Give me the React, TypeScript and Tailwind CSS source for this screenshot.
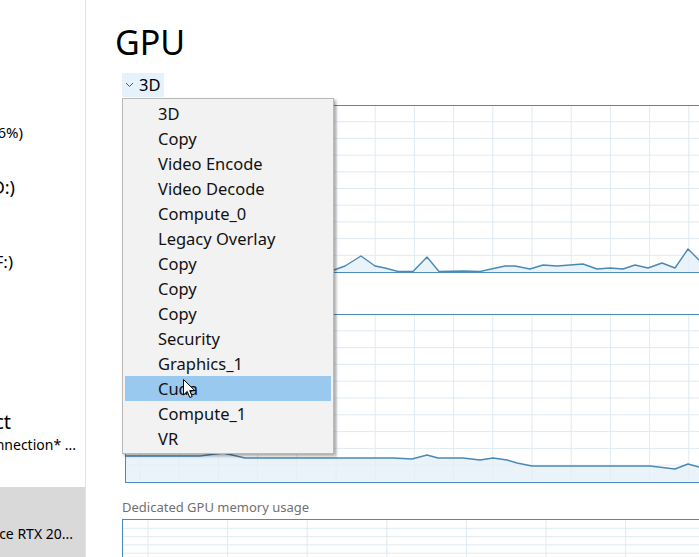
import React from 'react';

type Pt = [number, number];

interface ChartProps {
  className: string;
  origin: Pt;
  rows: number[];
  cols: number[];
  line?: Pt[];
  bottom?: number;
}

const FONT = '"Segoe UI", "Noto Sans", sans-serif';

const engines = [
  '3D',
  'Copy',
  'Video Encode',
  'Video Decode',
  'Compute_0',
  'Legacy Overlay',
  'Copy',
  'Copy',
  'Copy',
  'Security',
  'Graphics_1',
  'Cuda',
  'Compute_1',
  'VR',
];

// page coordinates, read off the capture
const load3d: Pt[] = [
  [126, 271], [150, 270], [170, 262], [190, 271], [230, 271], [260, 268],
  [300, 271], [330, 271.5], [345, 266], [361, 256], [375, 266], [385, 268],
  [398, 271.5], [413, 271.5], [427, 257], [439, 271.5], [463, 271],
  [480, 271.5], [505, 266], [515, 266], [530, 269], [543, 265], [557, 266],
  [583, 264], [597, 269], [610, 268], [623, 269], [635, 265], [648, 268],
  [662, 263], [675, 268], [688, 249], [699, 260], [720, 266], [745, 268],
];

const loadCopy: Pt[] = [
  [126, 456], [200, 456], [215, 454], [223, 453], [232, 455], [245, 458],
  [330, 458], [393, 458], [412, 459], [427, 455], [438, 458], [463, 458],
  [480, 460], [493, 458], [507, 460], [517, 463], [532, 466], [650, 466],
  [675, 469], [688, 464], [699, 467], [745, 466],
];

const range = (n: number, start: number, step: number) =>
  Array.from({ length: n }, (_, i) => start + step * i);

function Chart({ className, origin, rows, cols, line, bottom = 0 }: ChartProps) {
  const [ox, oy] = origin;
  const pts = line?.map(([x, y]) => `${x - ox},${y - oy}`).join(' ');
  return (
    <div className={`relative flex-none border border-[#4a8bbd] bg-white ${className}`}>
      <svg className="absolute inset-0 h-full w-full">
        {rows.map((y) => (
          <line key={`r${y}`} x1={0} x2={700} y1={y - oy} y2={y - oy} stroke="#dfeaf2" strokeWidth={1} />
        ))}
        {cols.map((x) => (
          <line key={`c${x}`} x1={x - ox} x2={x - ox} y1={0} y2={400} stroke="#dfeaf2" strokeWidth={1} />
        ))}
        {pts && (
          <>
            <polygon
              points={`0,${bottom} ${pts} 700,${bottom}`}
              fill="#e4eff8"
              fillOpacity={0.75}
            />
            <polyline points={pts} fill="none" stroke="#4a89b6" strokeWidth={1.4} strokeLinejoin="round" />
          </>
        )}
      </svg>
    </div>
  );
}

function Chevron() {
  return (
    <svg width="9" height="6" viewBox="0 0 9 6" className="mr-[5px]">
      <path d="M1 1 L4.5 4.5 L8 1" fill="none" stroke="#555" strokeWidth="1" />
    </svg>
  );
}

function Cursor() {
  return (
    <svg
      width="13"
      height="20"
      viewBox="0 0 13 20"
      className="pointer-events-none absolute left-[60px] top-[280px]"
    >
      <path
        d="M0.5 0.5 L0.5 16 L4.2 12.4 L6.8 18.5 L9.2 17.5 L6.7 11.6 L11.8 11.6 Z"
        fill="#fff"
        stroke="#000"
        strokeWidth="1"
        strokeLinejoin="round"
      />
    </svg>
  );
}

function SideLine({ width, size, text, className = '' }: { width: number; size: string; text: string; className?: string }) {
  return (
    <div
      className={`flex flex-none justify-end overflow-hidden whitespace-nowrap text-black ${size} ${className}`}
      style={{ width }}
    >
      <span className="flex-none">{text}</span>
    </div>
  );
}

export default function App() {
  const cols = range(16, 140, 39.2);
  return (
    <div className="flex h-[557px] w-[699px] overflow-hidden bg-white" style={{ fontFamily: FONT }}>
      <aside className="flex h-full w-[86px] flex-none flex-col overflow-hidden border-r border-[#e3e3e3] pt-[122px]">
        <SideLine width={23} size="text-[15px] leading-[20px]" text="3.5/15.9 GB (26%)" />
        <SideLine width={15} size="text-[18px] leading-[20px]" text="Disk 0 (D:)" className="mt-[35px]" />
        <SideLine width={13} size="text-[17px] leading-[20px]" text="Disk 1 (F:)" className="mt-[55px]" />
        <SideLine width={11} size="text-[20px] leading-[24px]" text="Wi-Fi Direct" className="mt-[138px]" />
        <SideLine width={76} size="text-[14px] leading-[20px]" text="Local Area Connection* ..." className="mt-[1px]" />
        <div className="mt-[32px] h-[80px] flex-none bg-[#d9d9d9] pt-[37px]">
          <SideLine width={73} size="text-[14px] leading-[20px]" text="NVIDIA GeForce RTX 20..." />
        </div>
      </aside>

      <main className="flex min-w-0 flex-1 flex-col overflow-hidden pl-[36px] pt-[22px]">
        <h1 className="-ml-[7px] flex-none text-[34px] font-normal leading-[40px] text-black">GPU</h1>

        <div className="relative mt-[11px] flex-none self-start">
          <div className="flex h-[24px] items-center bg-[#e5f1fb] pl-[3px] pr-[4px] text-[16.5px] text-black">
            <Chevron />
            3D
          </div>
          <div className="absolute left-0 top-[25px] z-10 w-[212px] border border-[#b9b9b9] bg-[#f2f2f2] p-[2px] shadow-[2px_2px_3px_rgba(0,0,0,0.35)]">
            {engines.map((name, i) => (
              <div
                key={i}
                className={`h-[25px] pl-[33px] text-[16.5px] leading-[26px] text-[#111] ${name === 'Cuda' ? 'bg-[#99c9ef]' : ''}`}
              >
                {name}
              </div>
            ))}
            <Cursor />
          </div>
        </div>

        <Chart
          className="ml-[3px] mt-[8px] h-[168px] w-[620px]"
          origin={[126, 106]}
          rows={range(9, 121.7, 16.7)}
          cols={cols}
          line={load3d}
          bottom={167}
        />

        {/* engine picker of the lower chart sits under the open menu */}
        <div className="mt-[9px] h-[24px] w-[60px] flex-none" />

        <Chart
          className="ml-[3px] mt-[8px] h-[169px] w-[620px]"
          origin={[126, 315]}
          rows={range(9, 330.8, 16.8)}
          cols={cols}
          line={loadCopy}
          bottom={168}
        />

        <div className="mt-[16px] flex-none text-[13px] leading-[16px] text-[#707070]">Dedicated GPU memory usage</div>

        <Chart
          className="mt-[4px] h-[170px] w-[620px]"
          origin={[123, 520]}
          rows={range(8, 528.3, 8.3)}
          cols={range(8, 148, 79.6)}
        />
      </main>
    </div>
  );
}
